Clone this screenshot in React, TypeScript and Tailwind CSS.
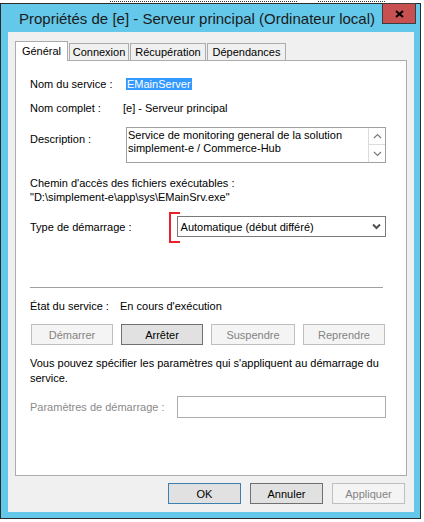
import React from 'react';

const font = "font-['Liberation_Sans',Arial,sans-serif]";

function Tab({ label, width, active }: { label: string; width: number; active?: boolean }) {
  if (active) {
    return (
      <div
        className="relative z-10 -mb-px flex h-[20px] items-start justify-center border-x border-t border-[#acacac] bg-white pt-[2px] text-[11px] leading-[14px] text-black"
        style={{ width }}
      >
        {label}
      </div>
    );
  }
  return (
    <div
      className="flex h-[17px] items-center justify-center border-x border-t border-[#acacac] bg-[#f0f0f0] text-[11px] leading-[14px] text-black"
      style={{ width }}
    >
      {label}
    </div>
  );
}

function Btn({
  label,
  disabled,
  isDefault,
  width = 82,
}: {
  label: string;
  disabled?: boolean;
  isDefault?: boolean;
  width?: number;
}) {
  const cls = disabled
    ? 'border-[#bfbfbf] bg-[#f4f4f4] text-[#838383]'
    : isDefault
      ? 'border-[#3c7fb1] bg-[#e1e1e1] text-black'
      : 'border-[#707070] bg-[#e1e1e1] text-black';
  return (
    <div
      className={`flex h-[21px] items-center justify-center border text-[11px] leading-[14px] ${cls}`}
      style={{ width }}
    >
      {label}
    </div>
  );
}

function Chevron({ up, className }: { up?: boolean; className?: string }) {
  return (
    <svg width="9" height="6" viewBox="0 0 9 6" className={className}>
      <polyline
        points={up ? '1,5 4.5,1.5 8,5' : '1,1 4.5,4.5 8,1'}
        fill="none"
        stroke="currentColor"
        strokeWidth="1.2"
      />
    </svg>
  );
}

export default function App() {
  return (
    <div className={`h-[522px] w-[424px] overflow-hidden bg-white ${font}`}>
      {/* bits of the window behind, peeking above */}
      <div className="flex h-[3px] items-start pt-px">
        <div className="ml-[110px] w-[187px] border-b border-dotted border-[#3a3a3a]" />
        <div className="ml-[21px] w-[67px] border-b border-dotted border-[#3a3a3a]" />
      </div>

      {/* window */}
      <div className="flex h-[516px] w-[421px] flex-col border border-[#2b2b2b] bg-[#64c8ea]">
        {/* title bar */}
        <div className="flex h-[28px] items-start justify-between">
          <div className="pl-[18px] pt-[5px] text-[15px] leading-[20px] text-[#1b1b1b]">
            Propriétés de [e] - Serveur principal (Ordinateur local)
          </div>
          <div className="mr-[4px] -mt-px flex h-[21px] w-[34px] items-center justify-center border border-[#3d3d3d] bg-[#c75050]">
            <svg width="9" height="8" viewBox="0 0 9 8">
              <path d="M1 1 L8 7 M8 1 L1 7" stroke="#000" strokeWidth="2" />
            </svg>
          </div>
        </div>

        {/* client area */}
        <div className="ml-[7px] flex h-[480px] w-[406px] flex-col bg-[#f0f0f0] px-[7px] pt-[9px]">
          <div className="flex h-[19px] items-end gap-px">
            <Tab label="Général" width={53} active />
            <Tab label="Connexion" width={60} />
            <Tab label="Récupération" width={76} />
            <Tab label="Dépendances" width={79} />
          </div>

          {/* tab panel */}
          <div className="flex h-[416px] flex-col border border-[#acacac] bg-white pl-[14px] pr-[20px] text-[11px] leading-[14px] text-black">
            <div className="mt-[16px] flex h-[14px] items-center">
              <span className="w-[93px]">Nom du service :</span>
              <span className="ml-[3px] bg-[#3399ff] px-px leading-[12px] text-white">EMainServer</span>
            </div>

            <div className="mt-[10px] flex h-[14px] items-center">
              <span className="w-[93px]">Nom complet :</span>
              <span>[e] - Serveur principal</span>
            </div>

            <div className="mt-[12px] flex">
              <span className="w-[96px] pt-[5px]">Description :</span>
              <div className="flex h-[36px] w-[260px] border border-[#a0a0a0]">
                <div className="flex-1 pl-px pt-[1px] leading-[13px]">
                  Service de monitoring general de la solution
                  <br />
                  simplement-e / Commerce-Hub
                </div>
                <div className="flex w-[17px] flex-col text-[#7a7a7a]">
                  <div className="flex h-[17px] items-center justify-center border-l border-b border-[#dcdcdc]">
                    <Chevron up />
                  </div>
                  <div className="flex h-[17px] items-center justify-center border-l border-[#dcdcdc]">
                    <Chevron />
                  </div>
                </div>
              </div>
            </div>

            <div className="mt-[13px] leading-[14px]">Chemin d'accès des fichiers exécutables :</div>
            <div className="leading-[14px]">"D:\simplement-e\app\sys\EMainSrv.exe"</div>

            <div className="mt-[12px] flex h-[21px] items-center">
              <span className="w-[147px]">Type de démarrage :</span>
              <div className="relative flex h-[21px] w-[210px] items-center justify-between border border-[#7a7a7a] bg-white pl-[3px] pr-[4px]">
                <div className="absolute -left-[9px] -top-[5px] h-[31px] w-[11px] border-y-2 border-l-2 border-[#e8202a]" />
                <span>Automatique (début différé)</span>
                <svg width="9" height="7" viewBox="0 0 9 7" className="text-[#505050]">
                  <polyline points="1,1.5 4.5,5 8,1.5" fill="none" stroke="currentColor" strokeWidth="2" />
                </svg>
              </div>
            </div>

            <div className="mt-[50px] h-px w-[353px] bg-[#a0a0a0]" />

            <div className="mt-[11px] flex h-[14px] items-center">
              <span className="w-[90px]">État du service :</span>
              <span>En cours d'exécution</span>
            </div>

            <div className="ml-px mt-[11px] flex gap-[8px]">
              <Btn label="Démarrer" disabled />
              <Btn label="Arrêter" />
              <Btn label="Suspendre" disabled width={84} />
              <Btn label="Reprendre" disabled />
            </div>

            <div className="mt-[11px] leading-[15px]">
              Vous pouvez spécifier les paramètres qui s'appliquent au démarrage du
              <br />
              service.
            </div>

            <div className="mt-[10px] flex h-[22px] items-center">
              <span className="w-[147px] text-[#8a8a8a]">Paramètres de démarrage :</span>
              <div className="h-[22px] w-[210px] border border-[#acacac] bg-white" />
            </div>
          </div>

          {/* dialog buttons */}
          <div className="mt-[7px] flex justify-end gap-[9px] pr-[2px]">
            <Btn label="OK" isDefault width={73} />
            <Btn label="Annuler" width={73} />
            <Btn label="Appliquer" disabled width={73} />
          </div>
        </div>
      </div>
    </div>
  );
}
